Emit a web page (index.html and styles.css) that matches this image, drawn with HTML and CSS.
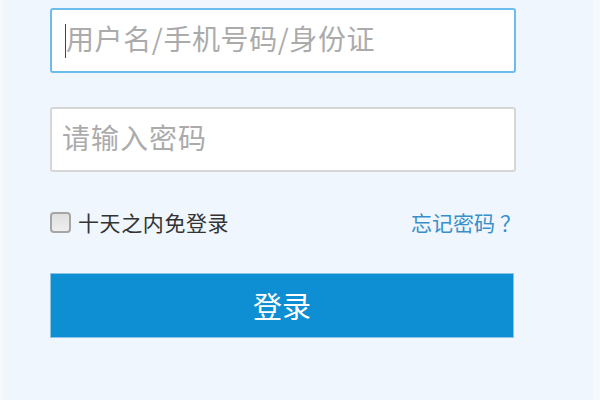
FILE: index.html
```html
<!DOCTYPE html>
<html lang="zh-CN">
<head>
<meta charset="utf-8">
<title>登录</title>
<link rel="stylesheet" href="styles.css">
</head>
<body>
<div class="page">
  <div class="inner">
    <form class="form">
      <div class="field focus"><span class="caret"></span><span class="ph">用户名/手机号码/身份证</span></div>
      <div class="field second"><span class="ph">请输入密码</span></div>
      <div class="row">
        <label class="remember"><span class="box"></span><span>十天之内免登录</span></label>
        <a class="forgot">忘记密码<span class="q">？</span></a>
      </div>
      <div class="btn">登录</div>
    </form>
  </div>
</div>
</body>
</html>
```
FILE: styles.css
```css
html, body {
  margin: 0;
  padding: 0;
  height: 100%;
  background: #eff6fd;
}
body {
  font-family: "Noto Sans CJK SC", "Noto Sans", sans-serif;
}
.page {
  box-sizing: border-box;
  height: 400px;
  width: 600px;
  border-left: 3px solid #f6f9fb;
  border-right: 7px solid #f5f9fc;
}
.inner {
  box-sizing: border-box;
  height: 100%;
  border-left: 3px solid #f2f6f8;
  background: #eff6fd;
}
.form {
  margin: 0 0 0 44px;
  padding-top: 8px;
  width: 466px;
  display: flex;
  flex-direction: column;
}
.field {
  box-sizing: border-box;
  height: 65px;
  border: 2px solid #d6d6d6;
  border-radius: 3px;
  background: #fff;
  padding-left: 10px;
  display: flex;
  align-items: center;
  font-size: 28px;
  color: #ababab;
  line-height: 1;
}
.field.focus {
  border-color: #6dbdec;
  padding-left: 13px;
}
.ph {
  margin-top: -5px;
  letter-spacing: 0.6px;
}
.second .ph {
  letter-spacing: 1px;
}
.caret {
  width: 1px;
  height: 34px;
  background: #444;
}
.second {
  margin-top: 34px;
}
.row {
  margin-top: 40px;
  height: 21px;
  display: flex;
  align-items: center;
  justify-content: space-between;
}
.remember {
  display: flex;
  align-items: center;
  gap: 7px;
  font-size: 21px;
  color: #333;
  line-height: 1;
  letter-spacing: 0.6px;
}
.box {
  box-sizing: border-box;
  width: 21px;
  height: 21px;
  border: 2px solid #a6a6a6;
  border-radius: 4px;
  background: linear-gradient(#e0e0e0, #eeeeee);
}
.forgot {
  font-size: 21px;
  color: #3a8fc9;
  line-height: 1;
  margin-right: 0;
  display: flex;
  align-items: center;
}
.q {
  padding-left: 5px;
  width: 16px;
}
.btn {
  box-sizing: border-box;
  margin-top: 40px;
  width: 464px;
  height: 65px;
  background: #0e8fd3;
  border: 1px solid #8fc3e3;
  color: #fff;
  font-size: 29px;
  display: flex;
  align-items: center;
  justify-content: center;
  line-height: 1;
}
```
